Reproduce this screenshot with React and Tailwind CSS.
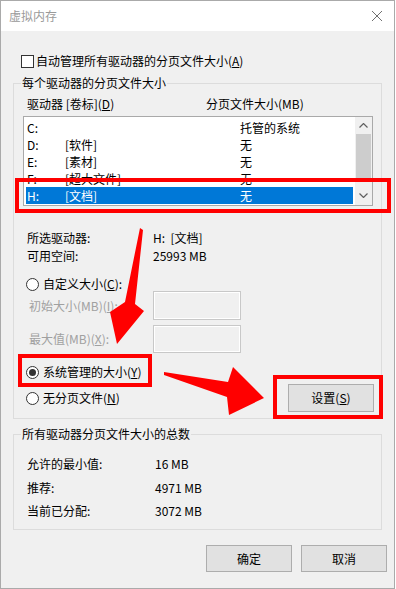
import React from 'react';

const font = { fontFamily: '"Noto Sans CJK SC", "Noto Sans", sans-serif' };

const drives = [
  { d: 'C:', label: '', size: '托管的系统' },
  { d: 'D:', label: '[软件]', size: '无' },
  { d: 'E:', label: '[素材]', size: '无' },
  { d: 'F:', label: '[超大文件]', size: '无' },
  { d: 'H:', label: '[文档]', size: '无', selected: true },
];

const Radio = ({ checked }) => (
  <span className="w-[13px] h-[13px] rounded-full border border-[#333] bg-white flex items-center justify-center shrink-0">
    {checked && <span className="w-[7px] h-[7px] rounded-full bg-[#333]" />}
  </span>
);

const Group = ({ title, className, children }) => (
  <div className={'relative border border-[#dcdcdc] ' + className}>
    <span className="absolute -top-[9px] left-[7px] px-[1px] bg-[#f0f0f0] text-[12px] leading-[16px] text-black">
      {title}
    </span>
    {children}
  </div>
);

export default function App() {
  return (
    <div style={font} className="relative w-[395px] h-[589px] border border-[#aaaaaa] bg-[#f0f0f0] text-[12px] text-black overflow-hidden">
      {/* title bar */}
      <div className="h-[30px] bg-white flex items-center justify-between pl-[8px] pr-[8px]">
        <span className="text-[12px] text-[#9a9a9a] leading-none">虚拟内存</span>
        <svg width="12" height="12" viewBox="0 0 12 12" className="mr-[3px]">
          <path d="M1 1 L11 11 M11 1 L1 11" stroke="#707070" strokeWidth="1" fill="none" />
        </svg>
      </div>

      <div className="pt-[22px]">
        <div className="flex items-center h-[16px] pl-[20px] gap-[2px]">
          <span className="w-[13px] h-[13px] border border-[#333] bg-white shrink-0" />
          <span className="leading-none">自动管理所有驱动器的分页文件大小(<u>A</u>)</span>
        </div>

        <Group title="每个驱动器的分页文件大小" className="mx-[12px] mt-[14px] pt-[12px] pb-[6px]">
          <div className="flex h-[16px] items-center pl-[13px] leading-none">
            <span className="w-[179px]">驱动器 [卷标](<u>D</u>)</span>
            <span>分页文件大小(MB)</span>
          </div>

          <div className="ml-[9px] mr-[8px] mt-[4px] h-[90px] border border-[#a9a9a9] bg-white flex">
            <div className="flex-1 pt-[2px] px-[2px]">
              {drives.map((r) => (
                <div
                  key={r.d}
                  className={
                    'h-[17px] flex items-center pl-[1px] leading-none ' +
                    (r.selected ? 'bg-[#0078d7] text-white' : '')
                  }
                >
                  <span className="w-[38px]">{r.d}</span>
                  <span className="w-[175px]">{r.label}</span>
                  <span>{r.size}</span>
                </div>
              ))}
            </div>
            <div className="w-[17px] bg-[#f0f0f0] flex flex-col">
              <div className="h-[17px] flex items-center justify-center">
                <svg width="9" height="5" viewBox="0 0 9 5">
                  <path d="M0.5 4.5 L4.5 0.5 L8.5 4.5" stroke="#606060" strokeWidth="1.2" fill="none" />
                </svg>
              </div>
              <div className="mx-[1px] h-[45px] bg-[#cdcdcd]" />
              <div className="flex-1" />
              <div className="h-[17px] flex items-center justify-center mb-[1px]">
                <svg width="9" height="5" viewBox="0 0 9 5">
                  <path d="M0.5 0.5 L4.5 4.5 L8.5 0.5" stroke="#606060" strokeWidth="1.2" fill="none" />
                </svg>
              </div>
            </div>
          </div>

          <div className="pl-[13px] mt-[24px] flex h-[16px] items-center leading-none">
            <span className="w-[126px]">所选驱动器:</span>
            <span>H:&nbsp;&nbsp;[文档]</span>
          </div>
          <div className="pl-[13px] mt-[2px] flex h-[16px] items-center leading-none">
            <span className="w-[126px]">可用空间:</span>
            <span>25993 MB</span>
          </div>

          <div className="pl-[12px] mt-[13px] flex h-[14px] items-center gap-[4px] leading-none">
            <Radio />
            <span>自定义大小(<u>C</u>):</span>
          </div>
          <div className="pl-[15px] flex h-[29px] items-center leading-none">
            <span className="w-[124px] text-[#a0a0a0]">初始大小(MB)(<u>I</u>):</span>
            <span className="w-[88px] h-[29px] border border-[#c8c8c8] bg-[#f0f0f0] shadow-[inset_0_0_0_1px_#ffffff]" />
          </div>
          <div className="pl-[15px] mt-[5px] flex h-[28px] items-center leading-none">
            <span className="w-[124px] text-[#a0a0a0]">最大值(MB)(<u>X</u>):</span>
            <span className="w-[88px] h-[28px] border border-[#c8c8c8] bg-[#f0f0f0] shadow-[inset_0_0_0_1px_#ffffff]" />
          </div>

          <div className="pl-[12px] mt-[11px] flex h-[16px] items-center gap-[4px] leading-none">
            <Radio checked />
            <span>系统管理的大小(<u>Y</u>)</span>
          </div>
          <div className="pl-[12px] pr-[7px] mt-[4px] flex h-[28px] items-center justify-between leading-none">
            <div className="flex items-center gap-[4px]">
              <Radio />
              <span>无分页文件(<u>N</u>)</span>
            </div>
            <button className="w-[86px] h-[28px] bg-[#e1e1e1] border border-[#adadad] text-[12px] leading-none">
              设置(<u>S</u>)
            </button>
          </div>
        </Group>

        <Group title="所有驱动器分页文件大小的总数" className="mx-[12px] mt-[15px] pt-[21px] pb-[10px]">
          <div className="pl-[13px] flex h-[16px] items-center leading-none">
            <span className="w-[128px]">允许的最小值:</span>
            <span>16 MB</span>
          </div>
          <div className="pl-[13px] mt-[8px] flex h-[16px] items-center leading-none">
            <span className="w-[128px]">推荐:</span>
            <span>4971 MB</span>
          </div>
          <div className="pl-[13px] mt-[7px] flex h-[16px] items-center leading-none">
            <span className="w-[128px]">当前已分配:</span>
            <span>3072 MB</span>
          </div>
        </Group>

        <div className="flex justify-end gap-[9px] pr-[7px] mt-[15px]">
          <button className="w-[86px] h-[27px] bg-[#e1e1e1] border border-[#adadad] text-[12px] leading-none">确定</button>
          <button className="w-[86px] h-[27px] bg-[#e1e1e1] border border-[#adadad] text-[12px] leading-none">取消</button>
        </div>
      </div>

      {/* annotation overlay */}
      <div className="absolute left-[14px] top-[177px] w-[376px] h-[35px] border-[4px] border-[#ff0000] pointer-events-none" />
      <div className="absolute left-[17px] top-[353px] w-[134px] h-[33px] border-[4px] border-[#ff0000] pointer-events-none" />
      <div className="absolute left-[272px] top-[374px] w-[110px] h-[44px] border-[4px] border-[#ff0000] pointer-events-none" />
      <svg className="absolute -left-[1px] -top-[1px] pointer-events-none" width="396" height="589" viewBox="0 0 396 589">
        <polygon points="140,228 143,230 135,304 144,311 117,344 110,312 125,302" fill="#ff0000" />
        <polygon points="164,372 228,382 233,367 264,398 229,415 227,397 164,375" fill="#ff0000" />
      </svg>
    </div>
  );
}
